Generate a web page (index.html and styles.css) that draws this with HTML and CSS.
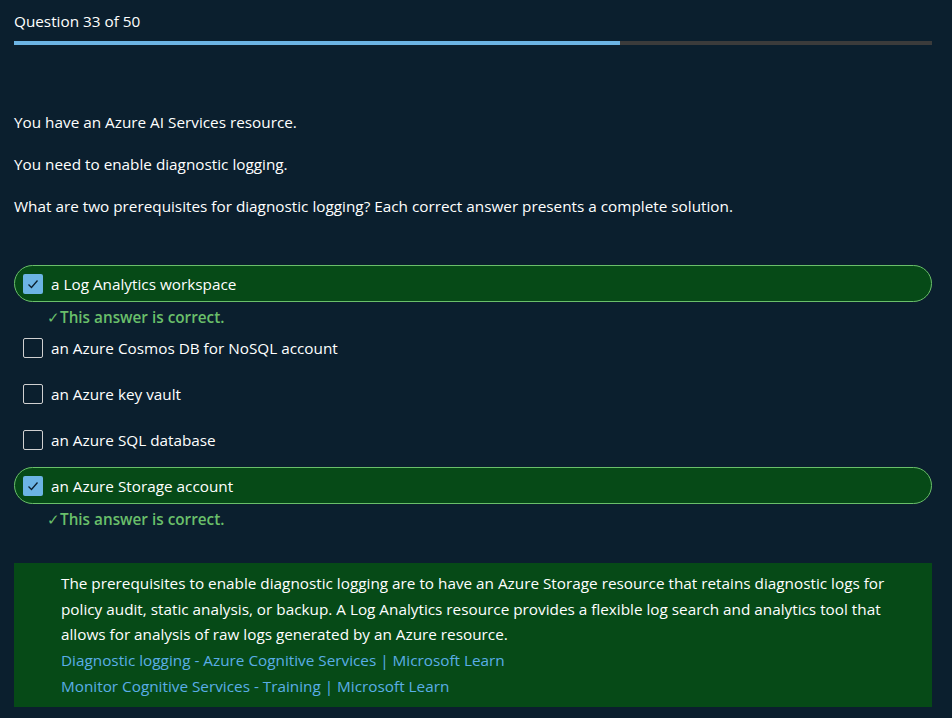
FILE: index.html
```html
<!DOCTYPE html>
<html>
<head>
<meta charset="utf-8">
<link rel="stylesheet" href="styles.css">
</head>
<body>
<div class="page">
  <div class="header">Question 33 of 50</div>
  <div class="progress"><div class="progress-fill" style="width:66%"></div></div>

  <div class="question">
    <p>You have an Azure AI Services resource.</p>
    <p>You need to enable diagnostic logging.</p>
    <p>What are two prerequisites for diagnostic logging? Each correct answer presents a complete solution.</p>
  </div>

  <div class="options">
    <div class="option correct">
      <span class="box checked"><svg viewBox="0 0 20 20" width="20" height="20"><path d="M5.5 10.5 L8.5 13.5 L14.5 6.5" fill="none" stroke="#0b1f2e" stroke-width="1.3"/></svg></span>
      <span class="label">a Log Analytics workspace</span>
    </div>
    <div class="feedback"><span class="tick">✓</span>This answer is correct.</div>

    <div class="option">
      <span class="box"></span>
      <span class="label">an Azure Cosmos DB for NoSQL account</span>
    </div>
    <div class="option">
      <span class="box"></span>
      <span class="label">an Azure key vault</span>
    </div>
    <div class="option">
      <span class="box"></span>
      <span class="label">an Azure SQL database</span>
    </div>
    <div class="option correct">
      <span class="box checked"><svg viewBox="0 0 20 20" width="20" height="20"><path d="M5.5 10.5 L8.5 13.5 L14.5 6.5" fill="none" stroke="#0b1f2e" stroke-width="1.3"/></svg></span>
      <span class="label">an Azure Storage account</span>
    </div>
    <div class="feedback"><span class="tick">✓</span>This answer is correct.</div>
  </div>

  <div class="explanation">
    <p>The prerequisites to enable diagnostic logging are to have an Azure Storage resource that retains diagnostic logs for policy audit, static analysis, or backup. A Log Analytics resource provides a flexible log search and analytics tool that allows for analysis of raw logs generated by an Azure resource.</p>
    <a href="#">Diagnostic logging - Azure Cognitive Services | Microsoft Learn</a>
    <a href="#">Monitor Cognitive Services - Training | Microsoft Learn</a>
  </div>
</div>
</body>
</html>
```

FILE: styles.css
```css
html, body {
  margin: 0;
  padding: 0;
  background: #0b1f2e;
}
body {
  font-family: "Open Sans", "Noto Sans", sans-serif;
  font-size: 15.3px;
  color: #ffffff;
}
.page {
  padding: 0 20px 0 14px;
}
.header {
  padding-top: 11px;
  height: 30px;
  line-height: 20px;
  box-sizing: border-box;
}
.progress {
  margin-top: 11px;
  height: 4px;
  background: #3b3b3b;
}
.progress-fill {
  height: 100%;
  background: #6cb4e4;
}
.question {
  padding-top: 67px;
}
.question p {
  margin: 0 0 22px 0;
  line-height: 20px;
}
.options {
  margin-top: 49px;
  display: flex;
  flex-direction: column;
}
.option {
  display: flex;
  align-items: center;
  height: 37px;
  box-sizing: border-box;
  padding-left: 8px;
  border: 1px solid transparent;
  border-radius: 19px;
  margin-bottom: 9px;
}
.option.correct {
  background: #064a17;
  border-color: #6abf6a;
  margin-bottom: 0;
}
.box {
  width: 20px;
  height: 20px;
  box-sizing: border-box;
  border: 1.5px solid #d0d0d0;
  border-radius: 2px;
  margin-right: 8px;
  display: flex;
}
.box.checked {
  background: #6cb4e4;
  border: none;
}
.label {
  line-height: 20px;
}
.feedback {
  color: #6abf6a;
  font-weight: 600;
  padding-left: 33px;
  padding-top: 5px;
  height: 27px;
  box-sizing: border-box;
  line-height: 20px;
}
.tick {
  font-weight: 400;
}
.explanation {
  margin-top: 32px;
  background: #064a17;
  padding: 8px 40px 7px 47px;
  line-height: 25.7px;
}
.explanation p {
  margin: 0;
}
.explanation a {
  display: block;
  color: #5aaee6;
  text-decoration: none;
}
```
